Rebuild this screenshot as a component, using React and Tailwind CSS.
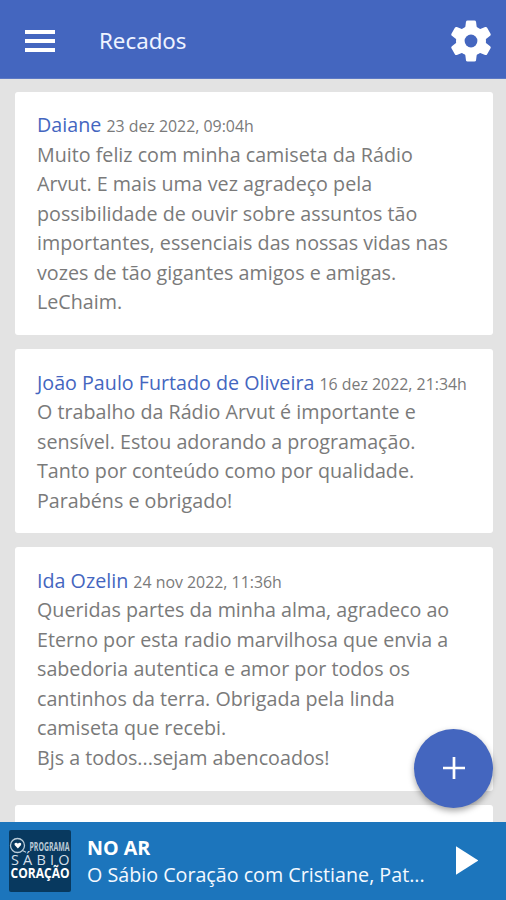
import React from 'react';

const MESSAGES = [
    {
        name: 'Daiane',
        date: '23 dez 2022, 09:04h',
        lines: [
            'Muito feliz com minha camiseta da Rádio',
            'Arvut. E mais uma vez agradeço pela',
            'possibilidade de ouvir sobre assuntos tão',
            'importantes, essenciais das nossas vidas nas',
            'vozes de tão gigantes amigos e amigas.',
            'LeChaim.',
        ],
    },
    {
        name: 'João Paulo Furtado de Oliveira',
        date: '16 dez 2022, 21:34h',
        lines: [
            'O trabalho da Rádio Arvut é importante e',
            'sensível. Estou adorando a programação.',
            'Tanto por conteúdo como por qualidade.',
            'Parabéns e obrigado!',
        ],
    },
    {
        name: 'Ida Ozelin',
        date: '24 nov 2022, 11:36h',
        lines: [
            'Queridas partes da minha alma, agradeco ao',
            'Eterno por esta radio marvilhosa que envia a',
            'sabedoria autentica e amor por todos os',
            'cantinhos da terra. Obrigada pela linda',
            'camiseta que recebi.',
            'Bjs a todos...sejam abencoados!',
        ],
    },
];

function Header() {
    return (
        <header className="h-[79px] shrink-0 bg-[#4466bf] flex items-center pl-[25px] pr-[14px] pb-[1px] border-b border-[#5d79c4]">
            <button className="flex flex-col gap-[5px] w-[30px] pt-[4px]" aria-label="Menu">
                <span className="h-[4px] w-full bg-white" />
                <span className="h-[4px] w-full bg-white" />
                <span className="h-[4px] w-full bg-white" />
            </button>
            <h1 className="ml-[44px] pt-[5px] font-['Noto_Sans',sans-serif] text-[22.3px] leading-[30px] text-[#eef3ff]">Recados</h1>
            <button className="ml-auto pt-[4px]" aria-label="Configurações">
                <svg className="w-[42px] h-[42px]" viewBox="0 0 42 42">
                    <g fill="#fff">
                        {[0, 60, 120].map((angle) => (
                            <path
                                key={angle}
                                transform={`rotate(${angle} 21 21)`}
                                d="M17.6 .4h6.8q1.4 0 1.6 1.4l1 7.2v24l-1 7.2q-.2 1.4-1.6 1.4h-6.8q-1.4 0-1.6-1.4L15 33V9l1-7.2Q16.2.4 17.6.4z"
                            />
                        ))}
                        <circle cx="21" cy="21" r="15" />
                    </g>
                    <circle cx="21" cy="21" r="6.4" fill="#4466bf" />
                </svg>
            </button>
        </header>
    );
}

function MessageCard({ message }) {
    return (
        <article className="shrink-0 bg-white rounded-[3px] px-[22px] pt-[18.25px] pb-[18.25px] whitespace-nowrap text-[19.7px] leading-[29.55px] text-[#7a7a7a]">
            <div className="h-[29.5px]">
                <span className="text-[#4466bf]">{message.name}</span>{' '}
                <span className="text-[15.9px]">{message.date}</span>
            </div>
            {message.lines.map((line) => (
                <p key={line}>{line}</p>
            ))}
        </article>
    );
}

function Cover() {
    return (
        <svg className="w-[62px] h-[62px] rounded-[2px]" viewBox="0 0 62 62">
            <rect width="62" height="62" fill="#08395f" />
            <circle cx="8.5" cy="15.5" r="7" fill="none" stroke="#b9cbd8" strokeWidth="1.3" />
            <path d="M8.9 18.6L5.6 15q-.6-2.4 1.5-2.3 1.2 0 1.8 1.1.6-1.1 1.9-1.1 2 .1 1.3 2.3z" fill="#fff" />
            <path d="M13.5 20.5l3.5 1.7" stroke="#b9cbd8" strokeWidth="1.2" />
            <g fontFamily="'Open Sans', sans-serif">
                <text x="20.5" y="20.5" textLength="40" lengthAdjust="spacingAndGlyphs" fontSize="11.5" fontWeight="700" fill="#b9c9d6">PROGRAMA</text>
                <text x="2" y="34.6" textLength="58.5" fontSize="14.5" fill="#d3dfe8">SÁBIO</text>
                <text x="1.5" y="47.6" textLength="59" lengthAdjust="spacingAndGlyphs" fontSize="14.8" fontWeight="700" fill="#fff">CORAÇÃO</text>
            </g>
        </svg>
    );
}

function Player() {
    return (
        <footer className="h-[78px] shrink-0 bg-[#1c75bc] flex items-center pl-[9px] pr-[28px] text-[#f4f9ff]">
            <Cover />
            <div className="ml-[16px] text-[19.7px] leading-[27px] whitespace-nowrap">
                <p className="font-bold text-white">NO AR</p>
                <p>O Sábio Coração com Cristiane, Pat...</p>
            </div>
            <button className="ml-auto pb-[2px]" aria-label="Tocar">
                <svg className="w-[22.5px] h-[29px]" viewBox="0 0 23 29">
                    <path d="M0 0l23 14.5L0 29z" fill="#fff" />
                </svg>
            </button>
        </footer>
    );
}

export default function App() {
    return (
        <div className="relative w-[506px] h-[900px] flex flex-col overflow-hidden bg-[#e3e3e3] font-['Open_Sans',sans-serif]">
            <Header />
            <main className="flex-1 min-h-0 overflow-hidden flex flex-col gap-[14px] pt-[13px] pl-[15px] pr-[13px]">
                {MESSAGES.map((message) => (
                    <MessageCard key={message.name} message={message} />
                ))}
                <div className="h-[60px] shrink-0 bg-white rounded-[3px]" />
            </main>
            <Player />

            {/* Floating action button */}
            <button
                className="absolute right-[13px] bottom-[92.5px] w-[79px] h-[79px] rounded-full bg-[#4466bf] flex items-center justify-center shadow-[0_3px_6px_rgba(0,0,0,0.35)]"
                aria-label="Novo recado"
            >
                <svg className="w-[22px] h-[22px]" viewBox="0 0 22 22">
                    <path d="M11 0v22M0 11h22" stroke="#fff" strokeWidth="2.7" />
                </svg>
            </button>
        </div>
    );
}
